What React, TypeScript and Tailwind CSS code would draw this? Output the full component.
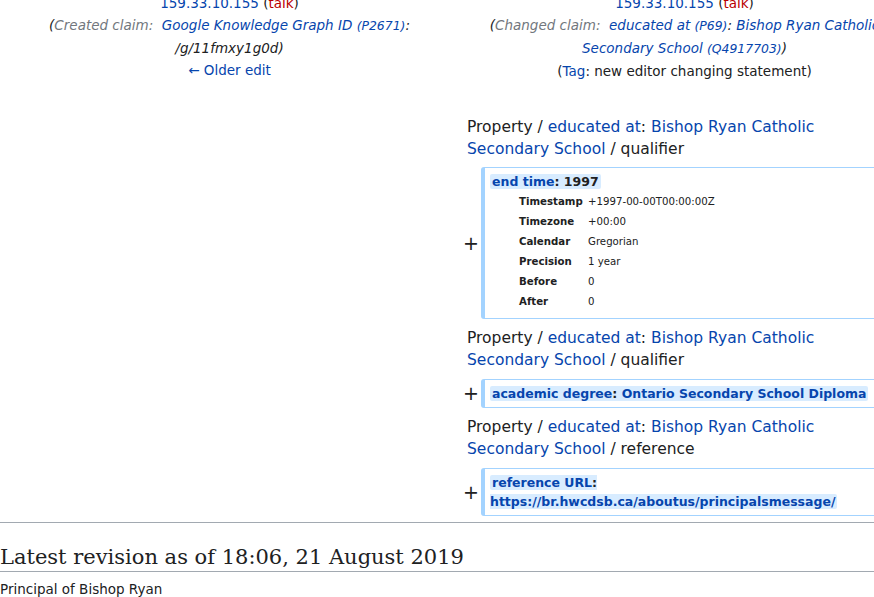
import React from 'react';

const link = 'text-[#0645ad]';

const Id = ({ children }: { children: React.ReactNode }) => (
  <span className="text-[0.92em]">{children}</span>
);

const PropertyHeader = ({ kind }: { kind: string }) => (
  <div className="pl-[8px] pr-[18px] text-[15.5px] leading-[22px]">
    Property / <span className={link}>educated at</span>:{' '}
    <span className={link}>Bishop Ryan Catholic Secondary School</span> / {kind}
  </div>
);

const AddedRow = ({ children }: { children: React.ReactNode }) => (
  <div className="grid grid-cols-[22px_1fr] items-center">
    <div className="pr-[2px] text-right text-[19px] leading-none">+</div>
    <div className="rounded-[3px] border border-l-4 border-[#a3d3ff] py-[4px] pl-[5px] pr-[4px] text-[12.5px] font-bold leading-[19px]">
      {children}
    </div>
  </div>
);

const Hl = ({ children }: { children: React.ReactNode }) => (
  <span className="rounded-[2px] bg-[#d8ecff] px-[2px]">{children}</span>
);

const timeRows = [
  ['Timestamp', '+1997-00-00T00:00:00Z'],
  ['Timezone', '+00:00'],
  ['Calendar', 'Gregorian'],
  ['Precision', '1 year'],
  ['Before', '0'],
  ['After', '0'],
];

export default function App() {
  return (
    <div className="h-[597px] w-[874px] overflow-hidden bg-white font-['DejaVu_Sans',sans-serif] text-[13.5px] text-[#202122]">
      <div className="-mt-[8px] w-[910px]">
        <div className="grid grid-cols-[459px_451px] text-center leading-[22px]">
          <div>
            <div>
              <span className={link}>159.33.10.155</span> (<span className="text-[#ba0000]">talk</span>)
            </div>
            <div className="italic">
              (<span className="text-[#72777d]">Created claim:&nbsp;</span>{' '}
              <span className={link}>
                Google Knowledge Graph ID <Id>(P2671)</Id>
              </span>
              :<br />
              /g/11fmxy1g0d)
            </div>
            <div className={link}>← Older edit</div>
          </div>
          <div>
            <div>
              <span className={link}>159.33.10.155</span> (<span className="text-[#ba0000]">talk</span>)
            </div>
            <div className="whitespace-nowrap italic">
              (<span className="text-[#72777d]">Changed claim:&nbsp;</span>{' '}
              <span className={link}>
                educated at <Id>(P69)</Id>
              </span>
              : <span className={link}>Bishop Ryan Catholic</span>
              <br />
              <span className={link}>
                Secondary School <Id>(Q4917703)</Id>
              </span>
              )
            </div>
            <div>
              (<span className={link}>Tag</span>: new editor changing statement)
            </div>
          </div>
        </div>

        <div className="mt-[34px] grid grid-cols-[459px_451px]">
          <div />
          <div className="flex flex-col">
            <PropertyHeader kind="qualifier" />
            <div className="mt-[7px]">
              <AddedRow>
                <Hl>
                  <span className={link}>end time</span>: 1997
                </Hl>
                <table className="mb-[2px] ml-[29px] mt-[1px] text-[10.2px] leading-[20px]">
                  <tbody>
                    {timeRows.map(([k, v]) => (
                      <tr key={k}>
                        <td className="w-[69px] font-bold">{k}</td>
                        <td className="font-normal">{v}</td>
                      </tr>
                    ))}
                  </tbody>
                </table>
              </AddedRow>
            </div>
            <div className="mt-[8px]">
              <PropertyHeader kind="qualifier" />
            </div>
            <div className="mt-[8px]">
              <AddedRow>
                <Hl>
                  <span className={link}>academic degree</span>:{' '}
                  <span className={link}>Ontario Secondary School Diploma</span>
                </Hl>
              </AddedRow>
            </div>
            <div className="mt-[8px]">
              <PropertyHeader kind="reference" />
            </div>
            <div className="mt-[8px]">
              <AddedRow>
                <Hl>
                  <span className={link}>reference URL</span>:{' '}
                  <span className={link}>https://br.hwcdsb.ca/aboutus/principalsmessage/</span>
                </Hl>
              </AddedRow>
            </div>
          </div>
        </div>

        <div className="mt-[6px] w-[874px] border-t border-[#a2a9b1]">
          <h2 className="border-b border-[#a2a9b1] pt-[20px] font-['DejaVu_Serif',serif] text-[21px] font-normal leading-[28px]">
            Latest revision as of 18:06, 21 August 2019
          </h2>
          <div className="mt-[6px] leading-[22px]">Principal of Bishop Ryan</div>
        </div>
      </div>
    </div>
  );
}
